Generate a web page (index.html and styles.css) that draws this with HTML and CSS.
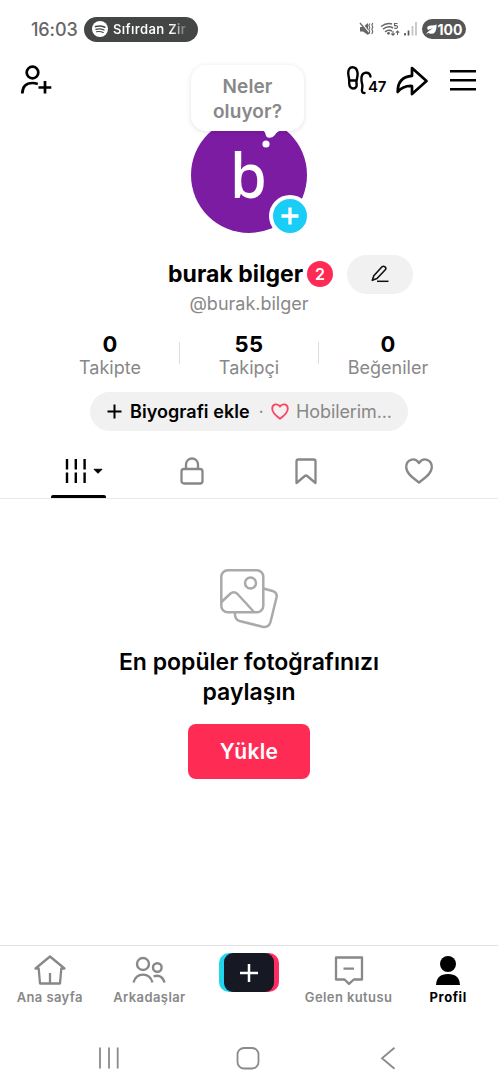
FILE: index.html
```html
<!DOCTYPE html>
<html lang="tr">
<head>
<meta charset="utf-8">
<title>burak bilger</title>
<link rel="stylesheet" href="styles.css">
</head>
<body>
<div class="screen">
  <div class="status">
    <span class="clock">16:03</span>
    <div class="now-playing">
      <svg width="16" height="16" viewBox="0 0 16 16"><circle cx="8" cy="8" r="8" fill="#fff"/><g fill="none" stroke="#444645" stroke-linecap="round"><path d="M3.500 5.600Q8.500 4.200 12.800 6.200" stroke-width="1.600"/><path d="M4 8.300Q8.200 7.200 12 9" stroke-width="1.300"/><path d="M4.400 10.800Q8 10 11.200 11.500" stroke-width="1.100"/></g></svg>
      <span class="song">Sıfırdan Zir</span>
    </div>
    <div class="signals">
      <svg width="15" height="14" viewBox="0 0 15 14"><path d="M1 5h3l5-4v12L4 9.500H1z" fill="#666"/><path d="M2 0l9 12" stroke="#fff" stroke-width="1.500"/><path d="M1 1l9 11" stroke="#666" stroke-width="1.300"/><path d="M10.800 1.500l-1 2 1 2-1 2 1 2-1 2.500M13.800 1l-1 2 1 2-1 2.500 1 2-1 2.500" fill="none" stroke="#666" stroke-width="1.100"/></svg>
      <svg class="wifi" width="20" height="15" viewBox="0 0 20 15"><g fill="none" stroke="#666" stroke-width="1.500"><path d="M1 4.500Q7 0 12 2"/><path d="M3 7.200Q8 3.200 13 6"/><path d="M5 9.800Q8.500 7 12 9"/></g><circle cx="8.500" cy="11.300" r="1.400" fill="#666"/><path d="M17.500 1.500h-3v2.200q3-.5 3 1.300t-3.200 1.200" fill="none" stroke="#666" stroke-width="1.200"/><path d="M13 9v4m-1.700-1.500L13 13.200l1.700-1.700M17.500 13V9m-1.700 1.700L17.500 9l1.700 1.700" fill="none" stroke="#666" stroke-width="1.100"/></svg>
      <svg class="bars" width="14" height="14" viewBox="0 0 14 14"><path d="M1 11v2.500M4.500 8.500v5" stroke="#555" stroke-width="1.700"/><path d="M8.500 4v9.500M12 0v13.500" stroke="#c2c2c2" stroke-width="1.700"/></svg>
      <div class="battery">
        <svg width="11" height="11" viewBox="0 0 11 11"><path d="M10.500.5Q11 10 5 9.800 3 9.800 2.500 8.800L0 10.500Q1 8 3.500 6.500L7 4 2 6Q-.5 1.800 5 1.500 9 1.500 10.500.5z" fill="#fff"/></svg>
        <span>100</span>
      </div>
    </div>
  </div>

  <header class="hero">
    <svg class="add-friend" width="34" height="32" viewBox="0 0 34 32"><g fill="none" stroke="#000" stroke-width="2.700"><circle cx="13.500" cy="8.500" r="5.800"/><path d="M3.300 29.500C3.500 22 8 19 13.500 19q2.500 0 5.300 1"/><path d="M26 17v12.500M19.500 23.500H32.300"/></g></svg>
    <div class="avatar">
      <span class="initial">b</span>
      <svg class="bubble-tail" width="20" height="19" viewBox="0 0 20 19"><path d="M0 0h20q-5 1-7.500 5.500-2 2.500-5.500 2.300-2.800-.2-3.300-3Q3 1 0 0z" fill="#fff"/><circle cx="4" cy="14" r="3.600" fill="#fff"/></svg>
      <div class="bubble">Neler<br>oluyor?</div>
      <div class="add-story"><svg width="18" height="18" viewBox="0 0 18 18"><path d="M9 .5v17M.5 9h17" stroke="#fff" stroke-width="3.300"/></svg></div>
    </div>
    <div class="actions">
      <div class="visits"><svg width="25" height="30" viewBox="0 0 25 30"><g fill="none" stroke="#000" stroke-width="2.400" stroke-linecap="round" stroke-linejoin="round"><path d="M10.500 6.500C10 3 8 1.200 5.500 1.200 2.500 1.200.9 4 1.300 8c.2 3 1.200 4.500.9 8.500C2 20.500 4 22.500 6.300 22.500c3 0 3.700-2.500 3.200-5.500-.5-3 1.600-6 1-10.500zM2.500 14.500h7"/><path d="M23.500 10.500C23 7.500 21 6.500 18.500 6.800c-3 .4-4.500 3.500-4 8 .4 3 1.500 4.500.7 7.500-.8 3-.2 4.500 2.300 4.700"/></g></svg><b>47</b></div>
      <svg class="share" width="33" height="30" viewBox="0 0 33 30"><path d="M16 2l14.500 13L16 28v-8q-9-.5-14.300 6Q1.500 11 16 9.800z" fill="none" stroke="#000" stroke-width="2.700" stroke-linejoin="round"/></svg>
      <svg class="menu" width="28" height="22" viewBox="0 0 28 22"><path d="M1 2.300h26M1 11.300h26M1 20.300h26" stroke="#000" stroke-width="2.500"/></svg>
    </div>
  </header>

  <section class="identity">
    <div class="name-row">
      <h1>burak bilger</h1>
      <span class="badge">2</span>
      <div class="edit"><svg width="18" height="18" viewBox="0 0 18 18"><path d="M1.300 15.300L2.800 10.800 11 1.800Q12.400.6 14 1.800q1.500 1.400.3 3L6 13.500z" fill="none" stroke="#111" stroke-width="1.600" stroke-linejoin="round"/><path d="M6 16.300h11.500" stroke="#111" stroke-width="1.500"/></svg></div>
    </div>
    <p class="handle">@burak.bilger</p>
  </section>

  <section class="stats">
    <div class="stat"><b>0</b><span>Takipte</span></div>
    <div class="stat"><b>55</b><span>Takipçi</span></div>
    <div class="stat"><b>0</b><span class="likes">Beğeniler</span></div>
  </section>

  <div class="bio">
    <svg width="15" height="15" viewBox="0 0 15 15"><path d="M7.500 .5v14M.5 7.500h14" stroke="#000" stroke-width="2"/></svg>
    <b>Biyografi ekle</b>
    <span class="sep">·</span>
    <svg width="18" height="17" viewBox="0 0 18 17"><path d="M9 15.700C6 13.500 1.200 10 1.200 5.700 1.200 1 6.500-.2 9 3.500 11.500-.2 16.800 1 16.800 5.700 16.800 10 12 13.500 9 15.700z" fill="none" stroke="#fe4663" stroke-width="1.800"/></svg>
    <span class="hobby">Hobilerim...</span>
  </div>

  <nav class="tabs">
    <div class="tab active">
      <svg width="38" height="26" viewBox="0 0 38 26"><path d="M2 1v10.500M10.800 1v10.500M19.600 1v10.500M2 14.500V25M10.800 14.500V25M19.600 14.500V25" stroke="#000" stroke-width="2.400"/><path d="M29 11.300h8L33 15.300z" fill="#000" stroke="#000" stroke-linejoin="round"/></svg>
    </div>
    <div class="tab"><svg width="24" height="28" viewBox="0 0 24 28"><g fill="none" stroke="#888" stroke-width="2.300"><rect x="1.500" y="12" width="21" height="14.500" rx="2.500"/><path d="M6 12V7.500a6 6 0 0 1 12 0V12"/></g></svg></div>
    <div class="tab"><svg width="22" height="27" viewBox="0 0 22 27"><path d="M1.500 25V3.300Q1.500 1.500 3.300 1.500h15.400q1.800 0 1.800 1.800V25L12.200 18q-1.200-1-2.400 0z" fill="none" stroke="#888" stroke-width="2.300" stroke-linejoin="round"/></svg></div>
    <div class="tab"><svg width="28" height="26" viewBox="0 0 28 26"><path d="M14 24.500C9 20.500 1.200 16 1.200 9 1.200 1.500 9.700-1.300 14 5 18.300-1.300 26.800 1.500 26.800 9 26.800 16 19 20.500 14 24.500z" fill="none" stroke="#888" stroke-width="2.300" stroke-linejoin="round"/></svg></div>
  </nav>

  <main class="empty">
    <svg width="60" height="62" viewBox="0 0 60 62"><g fill="none" stroke="#aaa" stroke-width="2.500" stroke-linejoin="round"><rect x="2.300" y="2.300" width="42" height="42" rx="6.500"/><circle cx="31.500" cy="15" r="5.500"/><path d="M2.500 34l9-8.500q3.500-2.800 7 .5L35 44"/><path d="M44.500 20.500l9 2.500q5 1.500 4 6.500L51.500 54q-1.800 6-8 4.800L20.500 53Q15.500 51.500 16 44.500"/></g></svg>
    <h2>En popüler fotoğrafınızı<br>paylaşın</h2>
    <button class="upload">Yükle</button>
  </main>

  <footer class="dock">
    <div class="item"><svg width="34" height="32" viewBox="0 0 34 32"><path d="M17 2.500L2.500 14.500h3.200L7 29.500h20l1.300-15h3.200zM17 19v10" fill="none" stroke="#888" stroke-width="2.300" stroke-linejoin="round"/></svg><span>Ana sayfa</span></div>
    <div class="item"><svg width="34" height="32" viewBox="0 0 34 32"><g fill="none" stroke="#888" stroke-width="2.400"><circle cx="11" cy="10" r="6"/><circle cx="25.300" cy="13.500" r="4.300"/><path d="M1.500 28.500C3 23 6.500 20.600 11 20.600s8 2.400 9.500 7.900M21.500 22.500c5-2 9.300 0 11 6"/></g></svg><span>Arkadaşlar</span></div>
    <div class="item create"><div class="plus"><svg width="20" height="20" viewBox="0 0 20 20"><path d="M10 1v18M1 10h18" stroke="#fff" stroke-width="2.500"/></svg></div></div>
    <div class="item"><svg width="34" height="32" viewBox="0 0 34 32"><path d="M4 3.500h26v22h-8.200L17 29.800l-4.500-4.300H4zM11.500 14.700h10.500" fill="none" stroke="#888" stroke-width="2.300" stroke-linejoin="round"/></svg><span>Gelen kutusu</span></div>
    <div class="item current"><svg width="34" height="32" viewBox="0 0 34 32"><circle cx="17" cy="10" r="8"/><path d="M5 31Q5.500 20 17 20T29 31z"/></svg><span>Profil</span></div>
  </footer>

  <div class="system">
    <svg width="22" height="22" viewBox="0 0 22 22"><path d="M2 .5v21M11 .5v21M19.700 .5v21" stroke="#8a8a8a" stroke-width="1.800"/></svg>
    <svg width="24" height="24" viewBox="0 0 24 24"><rect x="1.500" y="2" width="21" height="20.500" rx="6.500" fill="none" stroke="#8a8a8a" stroke-width="1.800"/></svg>
    <svg width="16" height="24" viewBox="0 0 16 24"><path d="M14.500 1.800L2 12.300l12.500 10.500" fill="none" stroke="#8a8a8a" stroke-width="1.800"/></svg>
  </div>
</div>
</body>
</html>
```

FILE: styles.css
```css
* { box-sizing: border-box; }
body { margin: 0; background: #fff; font-family: Inter, "Noto Sans", sans-serif; color: #000; }
h1, h2, p { margin: 0; }
svg { display: block; flex: none; }
.screen { width: 498px; height: 1080px; display: flex; flex-direction: column; overflow: hidden; }

.status { height: 58px; display: flex; align-items: center; padding: 0 32px 0 31px; }
.clock { width: 53px; font-size: 18px; font-weight: 500; color: #666; letter-spacing: -.1px; white-space: nowrap; }
.now-playing { width: 114px; height: 25px; border-radius: 13px; background: #444645; display: flex; align-items: center; gap: 5px; padding-left: 8px; }
.song { font-size: 13px; font-weight: 600; letter-spacing: .35px; white-space: nowrap; background: linear-gradient(90deg, #fff 80%, #666 100%); background-clip: text; color: transparent; }
.signals { margin-left: auto; display: flex; align-items: center; }
.wifi { margin-left: 6px; }
.bars { margin-left: 4px; }
.battery { width: 44px; height: 20px; margin-left: 4px; border-radius: 10px; background: #555; color: #fff; display: flex; align-items: center; justify-content: center; gap: 1px; font-size: 14px; font-weight: 700; }

.hero { height: 196px; display: grid; grid-template-columns: 191px 116px 191px; align-items: start; }
.add-friend { margin: 6px 0 0 19px; }
.avatar { position: relative; width: 116px; height: 116px; margin-top: 59px; border-radius: 50%; background: #7b1ca2; text-align: center; }
.initial { display: block; font: 500 62px/114px "Noto Sans", sans-serif; color: #fff; padding-right: 1px; transform: scaleX(.96); }
.bubble { position: absolute; left: 0; top: -52px; width: 113px; height: 66px; padding-top: 9px; border-radius: 15px; background: #fff; box-shadow: 0 1px 5px rgba(0,0,0,.12); color: #888; font-size: 19px; line-height: 25px; font-weight: 600; letter-spacing: .1px; }
.bubble-tail { position: absolute; left: 71px; top: 13px; z-index: 1; }
.add-story { position: absolute; left: 78px; top: 78px; width: 42px; height: 42px; border: 4px solid #fff; border-radius: 50%; background: #19cdf7; display: grid; place-items: center; }
.actions { display: flex; padding: 8px 0 0 40px; }
.visits { display: flex; align-items: flex-start; width: 49px; }
.visits b { font-size: 15px; line-height: 18px; font-weight: 600; letter-spacing: -.3px; margin: 12px 0 0 -4px; }
.menu { margin: 3px 0 0 20px; }

.identity { height: 67px; }
.name-row { display: flex; align-items: center; height: 40px; padding-left: 168px; }
h1 { width: 139px; font-size: 23px; line-height: 30px; font-weight: 700; letter-spacing: .05px; white-space: nowrap; }
.badge { width: 26px; height: 26px; border-radius: 50%; background: #fe2c55; color: #fff; font-size: 16px; line-height: 26px; font-weight: 600; text-align: center; }
.edit { width: 66px; height: 39px; margin-left: 14px; border-radius: 20px; background: #f1f1f1; display: grid; place-items: center; }
.handle { font-size: 18px; line-height: 20px; color: #888; text-align: center; font-weight: 400; }

.stats { display: grid; grid-template-columns: repeat(3, 139px); justify-content: center; padding-top: 10px; height: 71px; }
.stat { height: 46px; display: flex; flex-direction: column; align-items: center; position: relative; }
.stat b { font-size: 22px; line-height: 26px; letter-spacing: .4px; }
.stat span { font-size: 18px; line-height: 21px; color: #888; letter-spacing: 0; }
.stat + .stat::before { content: ""; position: absolute; left: -1px; top: 11px; width: 1px; height: 22px; background: #ddd; }

.bio { width: 318px; height: 39px; margin-left: 90px; border-radius: 20px; background: #f1f1f1; display: flex; align-items: center; padding-left: 17px; font-size: 18px; white-space: nowrap; }
.bio b { width: 121px; margin-left: 8px; font-weight: 600; letter-spacing: .05px; }
.bio .sep { width: 20px; text-align: center; color: #888; }
.bio .hobby { margin-left: 7px; color: #888; letter-spacing: -.1px; }

.tabs { height: 68px; border-bottom: 1px solid #e8e8e8; display: grid; grid-template-columns: repeat(4, 113.500px); justify-content: center; padding-top: 13px; }
.tab { height: 54px; display: flex; align-items: center; justify-content: center; position: relative; }
.tab.active svg { margin-left: 11px; }
.tab.active::after { content: ""; position: absolute; left: 29px; bottom: 0; width: 55px; height: 3px; border-radius: 2px 2px 0 0; background: #000; }

.empty { height: 446px; padding-top: 69px; display: flex; flex-direction: column; align-items: center; }
h2 { margin-top: 17px; font-size: 23px; line-height: 30px; font-weight: 600; text-align: center; }
.upload { width: 122px; height: 55px; margin-top: 17px; border: 0; border-radius: 8px; background: #fe2c55; color: #fff; font: 600 21px Inter, sans-serif; letter-spacing: .3px; }

.dock { height: 72px; border-top: 1px solid #e2e2e2; display: grid; grid-template-columns: repeat(5, 1fr); padding-top: 8px; }
.item { display: flex; flex-direction: column; align-items: center; color: #888; }
.item span { margin-top: 2px; font-size: 13px; line-height: 18px; font-weight: 600; letter-spacing: .4px; white-space: nowrap; }
.item.current { color: #000; fill: #000; }
.item.current span { font-weight: 700; letter-spacing: .6px; }
.create .plus { width: 60px; height: 39px; margin-top: -1px; border-radius: 10px; background: linear-gradient(90deg, #20d5ec 50%, #fe2c64 50%); display: grid; place-items: center; position: relative; }
.plus::before { content: ""; position: absolute; left: 5px; top: 0; width: 50px; height: 39px; border-radius: 9px; background: #161823; }
.plus svg { position: relative; }
.system { flex: 1; display: flex; align-items: flex-start; padding: 20px 0 0 98px; }
.system svg { margin-top: 10px; }
.system svg:nth-child(2) { margin: 9px 0 0 116px; }
.system svg:nth-child(3) { margin: 9px 0 0 120px; }
```
